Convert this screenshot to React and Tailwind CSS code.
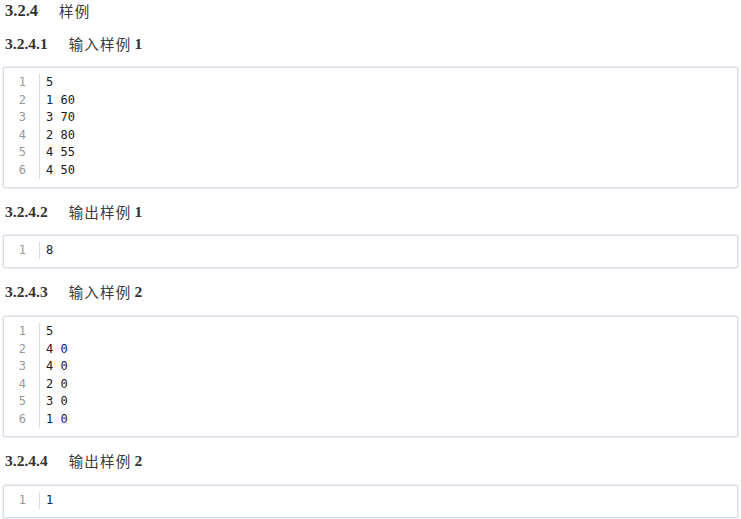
function Heading({ num, title, tail, big }) {
  const size = big ? "text-[16.5px]" : "text-[15.5px]";
  return (
    <div className={`flex items-center pl-[2px] text-[#333] leading-[20px] ${big ? "h-[21px]" : "h-full"}`}>
      <span className={`font-bold ${size} font-['Liberation_Serif','Times_New_Roman',serif]`}>{num}</span>
      <span className="ml-[21px] text-[14.5px] tracking-[1.2px] text-[#3a3a3a] font-['Noto_Sans_CJK_SC','Noto_Sans',sans-serif]">
        {title}
      </span>
      {tail && (
        <span className={`font-bold ${size} ml-[3px] font-['Liberation_Serif','Times_New_Roman',serif]`}>{tail}</span>
      )}
    </div>
  );
}

function CodeBox({ lines }) {
  return (
    <div className="border border-[#d6dde5] shadow-[0_0_0_1px_#eef1f5] rounded-[2px] bg-white pt-[6px] pb-[8px] flex font-['DejaVu_Sans_Mono','Liberation_Mono',monospace] text-[12px] leading-[17.5px]">
      <div className="w-[36px] pr-[13px] text-right text-[#999] border-r border-[#dcdcdc]">
        {lines.map((_, i) => (
          <div key={i}>{i + 1}</div>
        ))}
      </div>
      <div className="pl-[6px] text-[#1a1a1a]">
        {lines.map((l, i) => (
          <div key={i} className="whitespace-pre">{l}</div>
        ))}
      </div>
    </div>
  );
}

export default function App() {
  return (
    <div className="w-[741px] h-[519px] bg-white px-[3px] overflow-hidden grid grid-rows-[21px_46px_121px_47px_33px_48px_121px_48px_33px]">
      <Heading num="3.2.4" title="样例" big />
      <Heading num="3.2.4.1" title="输入样例" tail="1" />
      <CodeBox lines={["5", "1 60", "3 70", "2 80", "4 55", "4 50"]} />
      <Heading num="3.2.4.2" title="输出样例" tail="1" />
      <CodeBox lines={["8"]} />
      <Heading num="3.2.4.3" title="输入样例" tail="2" />
      <CodeBox lines={["5", "4 0", "4 0", "2 0", "3 0", "1 0"]} />
      <Heading num="3.2.4.4" title="输出样例" tail="2" />
      <CodeBox lines={["1"]} />
    </div>
  );
}
